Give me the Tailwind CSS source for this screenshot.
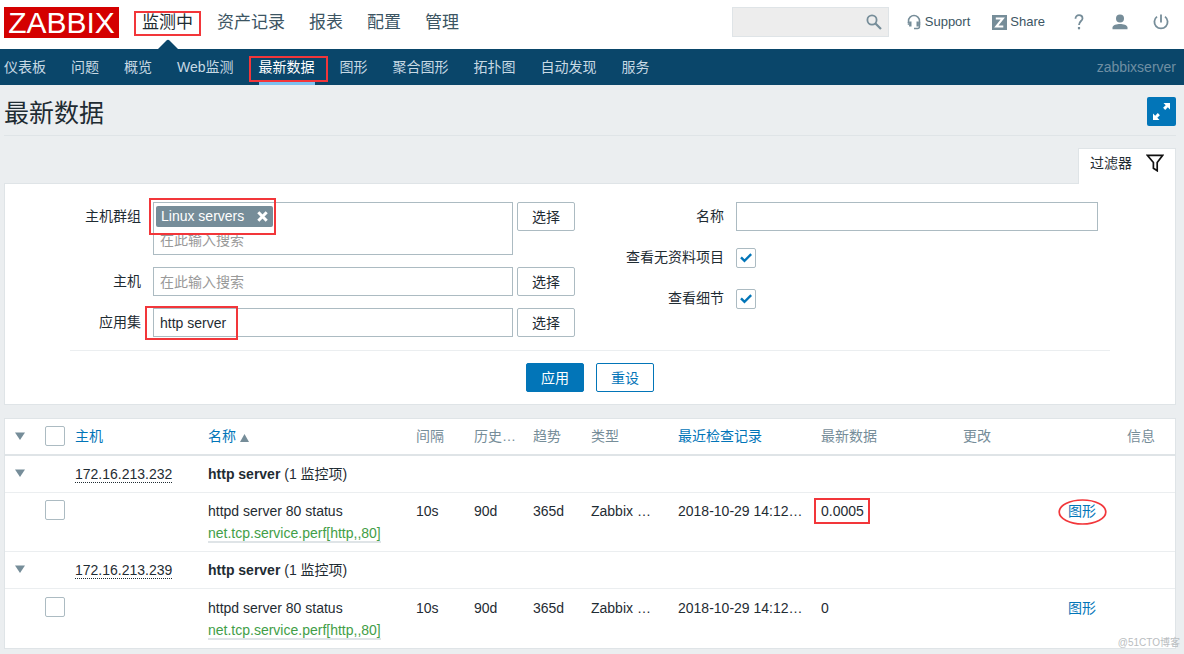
<!DOCTYPE html>
<html lang="zh-CN">
<head>
<meta charset="utf-8">
<meta name="viewport" content="width=device-width, initial-scale=1">
<title>最新数据</title>
<script src="https://cdn.jsdelivr.net/npm/@tailwindcss/browser@4"></script>
</head>
<body class="relative min-h-screen bg-[#ebeef0] font-['Liberation_Sans','Noto_Sans_CJK_SC',sans-serif] text-sm leading-[22px] text-[#1f2c33]">

<header class="flex h-[49px] items-start bg-white pl-1 pr-[15px]">
  <a href="#" class="mt-[7px] flex h-[31px] w-[115px] items-center justify-center bg-[#d40000] text-[30px] leading-[31px] text-white">ZABBIX</a>
  <nav class="ml-[23px] flex h-[49px] gap-6 text-[17px] leading-[46px] text-[#3c5563]" aria-label="主菜单">
    <a href="#" class="relative text-[#1f2c33]">监测中
      <span class="pointer-events-none absolute -left-2 -right-2 top-[11px] h-[25px] border-2 border-[#f2363a]"></span>
      <svg class="absolute bottom-0 left-1/2 -translate-x-1/2" width="20" height="10" viewBox="0 0 20 10"><path d="M0 10 8.500 1.500q1.500-1.500 3 0L20 10z" fill="#0a466a"/></svg>
    </a>
    <a href="#">资产记录</a>
    <a href="#">报表</a>
    <a href="#">配置</a>
    <a href="#">管理</a>
  </nav>
  <div class="ml-auto flex h-11 items-center text-[13px] text-[#3c5563]">
    <form class="flex h-[30px] w-[157px] items-center border border-[#dfe4e7] bg-[#ededed] pr-[6px]">
      <input type="text" aria-label="搜索" class="h-full min-w-0 flex-1 bg-transparent px-1 outline-none">
      <button type="button" aria-label="搜索">
        <svg width="16" height="16" viewBox="0 0 16 16" fill="none" stroke="#768d99" stroke-width="1.800"><circle cx="6" cy="6" r="4.600"/><path d="M9.500 9.500 15 15" stroke-width="2.200"/></svg>
      </button>
    </form>
    <a href="#" class="ml-[18px] flex items-center gap-1">
      <svg width="14" height="16" viewBox="0 0 14 16" fill="none" stroke="#768d99"><path d="M1.500 9V7a5.500 5.500 0 0 1 11 0v2" stroke-width="1.500"/><path d="M3.300 7.500v5M10.700 7.500v5" stroke-width="2.400"/><path d="M12.500 9v3.500a2 2 0 0 1-2 2H7" stroke-width="1.400"/><path d="M1.300 8v3M12.700 8v3" stroke-width="1"/></svg>
      Support
    </a>
    <a href="#" class="ml-[22px] flex items-center gap-[3px]">
      <svg width="15" height="15" viewBox="0 0 15 15"><path fill="#768d99" d="M0 0h15v15H0z"/><path d="M3.800 3.500h7L4.300 11.500h7" fill="none" stroke="#fff" stroke-width="2"/></svg>
      Share
    </a>
    <a href="#" class="ml-7 flex w-3 justify-center" aria-label="帮助">
      <svg width="10" height="16" viewBox="0 0 10 16" fill="none" stroke="#768d99" stroke-width="1.800"><path d="M1.500 4.800C1.500 2.300 3 1.200 5 1.200s3.500 1.200 3.500 3.200C8.500 7 5 7.200 5 11"/><path d="M5 13v2.300" stroke-width="2.200"/></svg>
    </a>
    <a href="#" class="ml-[27px]" aria-label="用户">
      <svg width="16" height="16" viewBox="0 0 16 16" fill="#768d99"><circle cx="8" cy="4.500" r="4"/><path d="M.5 15.200v-1.700C.5 11 5 10 8 10s7.500 1 7.500 3.500v1.700z"/></svg>
    </a>
    <a href="#" class="ml-[25px]" aria-label="退出">
      <svg width="16" height="16" viewBox="0 0 16 16" fill="none" stroke="#768d99" stroke-width="1.800"><path d="M4 2.600a6.600 6.600 0 1 0 8 0M8 .5v8"/></svg>
    </a>
  </div>
</header>

<nav class="flex h-9 items-stretch gap-[25px] bg-[#0a466a] pl-1 pr-2 leading-[36px] text-[#c7d9e4]" aria-label="监测中">
  <a href="#">仪表板</a>
  <a href="#">问题</a>
  <a href="#">概览</a>
  <a href="#">Web监测</a>
  <a href="#" class="relative border-b-3 border-[#7cc1f0] text-white">最新数据
    <span class="pointer-events-none absolute -left-[10px] -right-[13px] top-[7px] h-[26px] border-2 border-[#f2363a]"></span>
  </a>
  <a href="#">图形</a>
  <a href="#">聚合图形</a>
  <a href="#">拓扑图</a>
  <a href="#">自动发现</a>
  <a href="#">服务</a>
  <span class="ml-auto text-[#6f8fa3]">zabbixserver</span>
</nav>

<main class="ml-1 mr-2">
  <div class="flex items-center justify-between border-b border-[#dfe4e7] pb-[9px] pt-3">
    <h1 class="pt-[3px] text-[25px] leading-[26px]">最新数据</h1>
    <button type="button" aria-label="全屏" class="flex size-[29px] items-center justify-center rounded-xs bg-[#0275b8]">
      <svg width="19" height="19" viewBox="0 0 19 19" fill="#fff"><path d="M11.500 1H18v6.500l-2.200-2.200-2.600 2.600-2.100-2.100 2.600-2.600zM1 18v-6.500l2.200 2.200 2.600-2.600 2.100 2.100-2.600 2.600L7.500 18z"/></svg>
    </button>
  </div>

  <div class="mt-3 flex justify-end">
    <button type="button" class="relative -mb-px flex h-9 w-[98px] items-start justify-between border border-b-0 border-[#dfe4e7] bg-white px-[11px] pt-[3px]">
      过滤器
      <svg class="mt-[2px]" width="18" height="18" viewBox="0 0 18 18" fill="none" stroke="#111" stroke-width="1.700"><path d="M1.300 1.300h15.400L11.200 8.500v8.200L7.400 14.200V8.500z"/></svg>
    </button>
  </div>

  <form class="border border-[#dfe4e7] bg-white pb-3 pt-[18px]">
    <div class="mx-[65px] grid grid-cols-2 border-b border-[#ebeef0] pb-[13px]">
      <div class="flex flex-col gap-3 pr-[15px]">
        <div class="flex items-start">
          <label for="groups" class="w-[71px] text-right leading-[29px]">主机群组</label>
          <div class="relative ml-3 h-[53px] min-w-0 flex-1 border border-[#acbbc2] px-[2px] py-[3px]">
            <span class="flex h-[21px] w-[117px] items-center justify-between rounded-xs bg-[#768d99] px-[5px] leading-[21px] text-white">Linux servers
              <button type="button" aria-label="移除"><svg width="11" height="11" viewBox="0 0 11 11" stroke="#fff" stroke-width="3"><path d="m1.300 1.300 8.400 8.400M9.700 1.300 1.300 9.700"/></svg></button>
            </span>
            <input id="groups" type="text" placeholder="在此输入搜索" class="mt-[2px] block w-full px-1 leading-[22px] outline-none placeholder:text-[#999]">
            <span class="pointer-events-none absolute -left-[5px] -top-[5px] h-[37px] w-[127px] border-2 border-[#f2363a]"></span>
          </div>
          <button type="button" class="ml-1 h-[29px] w-[58px] rounded-xs border border-[#acbbc2]">选择</button>
        </div>
        <div class="flex items-start">
          <label for="hosts" class="w-[71px] text-right leading-[29px]">主机</label>
          <input id="hosts" type="text" placeholder="在此输入搜索" class="ml-3 h-[29px] min-w-0 flex-1 border border-[#acbbc2] px-[6px] outline-none placeholder:text-[#999]">
          <button type="button" class="ml-1 h-[29px] w-[58px] rounded-xs border border-[#acbbc2]">选择</button>
        </div>
        <div class="relative flex items-start">
          <label for="app" class="w-[71px] text-right leading-[29px]">应用集</label>
          <input id="app" type="text" value="http server" class="ml-3 h-[29px] min-w-0 flex-1 border border-[#acbbc2] px-[6px] outline-none">
          <button type="button" class="ml-1 h-[29px] w-[58px] rounded-xs border border-[#acbbc2]">选择</button>
          <span class="pointer-events-none absolute -top-[2px] left-[75px] h-[34px] w-[93px] border-2 border-[#f2363a]"></span>
        </div>
      </div>
      <div class="flex flex-col gap-3 pr-3">
        <div class="flex items-center">
          <label for="name" class="w-[134px] text-right leading-[29px]">名称</label>
          <input id="name" type="text" class="ml-3 h-[29px] min-w-0 flex-1 border border-[#acbbc2] px-[6px] outline-none">
        </div>
        <div class="flex items-center">
          <label for="nodata" class="w-[134px] text-right leading-[29px]">查看无资料项目</label>
          <span class="relative ml-3 size-5">
            <input id="nodata" type="checkbox" checked class="peer block size-5 appearance-none rounded-xs border border-[#acbbc2] bg-white">
            <svg class="pointer-events-none absolute left-1 top-[5px] hidden peer-checked:block" width="12" height="10" viewBox="0 0 12 10" fill="none" stroke="#0275b8" stroke-width="2.400"><path d="m1 4.300 3.500 3.500L11.200 1.200"/></svg>
          </span>
        </div>
        <div class="flex items-center">
          <label for="details" class="w-[134px] text-right leading-[29px]">查看细节</label>
          <span class="relative ml-3 size-5">
            <input id="details" type="checkbox" checked class="peer block size-5 appearance-none rounded-xs border border-[#acbbc2] bg-white">
            <svg class="pointer-events-none absolute left-1 top-[5px] hidden peer-checked:block" width="12" height="10" viewBox="0 0 12 10" fill="none" stroke="#0275b8" stroke-width="2.400"><path d="m1 4.300 3.500 3.500L11.200 1.200"/></svg>
          </span>
        </div>
      </div>
    </div>
    <div class="mt-3 flex justify-center gap-3">
      <button type="button" class="h-[29px] w-[58px] rounded-xs border border-[#0275b8] bg-[#0275b8] text-white">应用</button>
      <button type="button" class="h-[29px] w-[58px] rounded-xs border border-[#0275b8] text-[#0275b8]">重设</button>
    </div>
  </form>

  <div class="mt-[13px] border border-[#dfe4e7] bg-white">
    <table class="w-full table-fixed border-separate border-spacing-0 text-left [&_td]:px-[6px] [&_td]:py-[7px] [&_td]:align-top [&_th]:whitespace-nowrap [&_th]:border-b-2 [&_th]:border-[#dfe4e7] [&_th]:px-[6px] [&_th]:pb-[7px] [&_th]:pt-[6px] [&_th]:font-normal [&_th]:text-[#768d99]">
      <colgroup>
        <col class="w-[34px]"><col class="w-[30px]"><col class="w-[133px]"><col class="w-[208px]"><col class="w-[58px]"><col class="w-[59px]"><col class="w-[58px]"><col class="w-[87px]"><col class="w-[143px]"><col class="w-[142px]"><col class="w-[105px]"><col class="w-[59px]"><col>
      </colgroup>
      <thead>
        <tr>
          <th><button type="button" aria-label="全部折叠" class="ml-1 block"><svg width="10" height="8" viewBox="0 0 10 8"><path d="M0 .5h10L5 8z" fill="#768d99"/></svg></button></th>
          <th class="leading-5"><input type="checkbox" aria-label="全选" class="block size-5 appearance-none rounded-xs border border-[#acbbc2] bg-white"></th>
          <th><a href="#" class="text-[#0275b8]">主机</a></th>
          <th><a href="#" class="text-[#0275b8]">名称 <svg class="inline align-[-1px]" width="9" height="8" viewBox="0 0 9 8"><path d="M0 8h9L4.500 0z" fill="#768d99"/></svg></a></th>
          <th>间隔</th>
          <th>历史…</th>
          <th>趋势</th>
          <th>类型</th>
          <th><a href="#" class="text-[#0275b8]">最近检查记录</a></th>
          <th>最新数据</th>
          <th>更改</th>
          <th></th>
          <th>信息</th>
        </tr>
      </thead>
      <tbody>
        <tr class="[&_td]:border-b [&_td]:border-[#ebeef0]">
          <td><button type="button" aria-label="折叠" class="ml-1 mt-[6px] block"><svg width="10" height="8" viewBox="0 0 10 8"><path d="M0 .5h10L5 8z" fill="#768d99"/></svg></button></td>
          <td></td>
          <td><a href="#" class="border-b border-dotted border-[#1f2c33]">172.16.213.232</a></td>
          <td colspan="10"><b>http server</b> (1 监控项)</td>
        </tr>
        <tr class="[&_td]:border-b [&_td]:border-[#ebeef0]">
          <td></td>
          <td><input type="checkbox" aria-label="选择 172.16.213.232" class="block size-5 appearance-none rounded-xs border border-[#acbbc2] bg-white"></td>
          <td></td>
          <td>httpd server 80 status<br><a href="#" class="border-b-2 border-[#dfe4e7] text-[#429e47]">net.tcp.service.perf[http,,80]</a></td>
          <td>10s</td>
          <td>90d</td>
          <td>365d</td>
          <td class="whitespace-nowrap">Zabbix …</td>
          <td class="whitespace-nowrap">2018-10-29 14:12…</td>
          <td><span class="relative">0.0005<span class="pointer-events-none absolute -left-[7px] -right-[6px] -top-[5px] h-[26px] border-2 border-[#f2363a]"></span></span></td>
          <td></td>
          <td><a href="#" class="relative text-[#0275b8]">图形<svg class="pointer-events-none absolute -left-[10px] -top-[4px]" width="49" height="26" viewBox="0 0 49 26" fill="none" stroke="#f2363a" stroke-width="1.700"><ellipse cx="24.500" cy="13" rx="23.300" ry="12"/></svg></a></td>
          <td></td>
        </tr>
        <tr class="[&_td]:border-b [&_td]:border-[#ebeef0]">
          <td><button type="button" aria-label="折叠" class="ml-1 mt-[6px] block"><svg width="10" height="8" viewBox="0 0 10 8"><path d="M0 .5h10L5 8z" fill="#768d99"/></svg></button></td>
          <td></td>
          <td><a href="#" class="border-b border-dotted border-[#1f2c33]">172.16.213.239</a></td>
          <td colspan="10"><b>http server</b> (1 监控项)</td>
        </tr>
        <tr class="[&_td]:border-t [&_td]:border-transparent">
          <td></td>
          <td><input type="checkbox" aria-label="选择 172.16.213.239" class="block size-5 appearance-none rounded-xs border border-[#acbbc2] bg-white"></td>
          <td></td>
          <td>httpd server 80 status<br><a href="#" class="border-b-2 border-[#dfe4e7] text-[#429e47]">net.tcp.service.perf[http,,80]</a></td>
          <td>10s</td>
          <td>90d</td>
          <td>365d</td>
          <td class="whitespace-nowrap">Zabbix …</td>
          <td class="whitespace-nowrap">2018-10-29 14:12…</td>
          <td>0</td>
          <td></td>
          <td><a href="#" class="text-[#0275b8]">图形</a></td>
          <td></td>
        </tr>
      </tbody>
    </table>
  </div>
</main>

<span class="pointer-events-none absolute bottom-1 right-1 text-[10px] leading-[14px] text-[#b9bdc0]">@51CTO博客</span>
</body>
</html>
